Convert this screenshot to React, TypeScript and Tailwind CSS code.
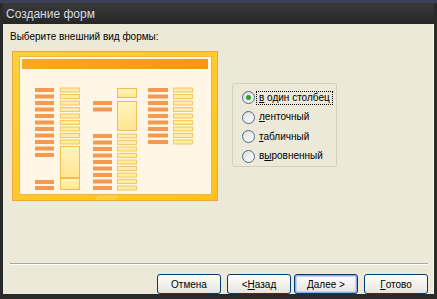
import React from "react";

const col1 = [37, 43.5, 50, 56.5, 63, 69.5, 76, 82.5, 89, 95.5, 102, 129, 135];
const col2 = [37, 43.5, 50, 56.5, 63, 69.5, 76, 82.5, 89];
const col34 = [83, 89.5, 96, 102.5, 109, 115.5, 122, 128.5, 135];

function FormPreview() {
  const orange = "#F59A50";
  const yFill = "#FFEDA0";
  const yStroke = "#F3BC50";
  return (
    <svg width="206" height="150" viewBox="0 0 206 150">
      <defs>
        <linearGradient id="frame" x1="0" y1="0" x2="1" y2="1">
          <stop offset="0" stopColor="#FFD23A" />
          <stop offset="1" stopColor="#FFC21A" />
        </linearGradient>
        <linearGradient id="bar" x1="0" y1="0" x2="1" y2="0">
          <stop offset="0" stopColor="#F9A825" />
          <stop offset="1" stopColor="#F7941D" />
        </linearGradient>
        <linearGradient id="box" x1="0" y1="0" x2="0" y2="1">
          <stop offset="0" stopColor="#FFF3C0" />
          <stop offset="1" stopColor="#FFE690" />
        </linearGradient>
      </defs>
      <rect x="0" y="0" width="206" height="150" fill="#F2A53C" />
      <rect x="1" y="1" width="204" height="148" fill="url(#frame)" />
      <rect x="7.5" y="5.5" width="192" height="138" fill="#FFF6E6" stroke="#F2B54A" />
      <rect x="10" y="8" width="186" height="10" fill="url(#bar)" />
      {col1.map((y) => (
        <rect key={"a" + y} x="23" y={y} width="19" height="4" fill={orange} />
      ))}
      {col2.map((y) => (
        <rect key={"b" + y} x="48.5" y={y} width="19" height="4" fill={yFill} stroke={yStroke} strokeWidth="0.8" />
      ))}
      <rect x="48.5" y="95.5" width="19" height="31" fill="url(#box)" stroke={yStroke} />
      <rect x="48.5" y="127.5" width="19" height="11" fill="url(#box)" stroke={yStroke} />
      {[50, 56.5].concat(col34).map((y) => (
        <rect key={"c" + y} x="81" y={y} width="19" height="4" fill={orange} />
      ))}
      <rect x="105.5" y="37.5" width="19" height="9" fill="url(#box)" stroke={yStroke} />
      <rect x="105.5" y="50.5" width="19" height="29" fill="url(#box)" stroke={yStroke} />
      {col34.map((y) => (
        <rect key={"d" + y} x="105.5" y={y} width="19" height="4" fill={yFill} stroke={yStroke} strokeWidth="0.8" />
      ))}
      {col2.map((y) => (
        <rect key={"e" + y} x="136" y={y} width="20" height="4" fill={orange} />
      ))}
      {col2.map((y) => (
        <rect key={"f" + y} x="161.5" y={y} width="19" height="4" fill={yFill} stroke={yStroke} strokeWidth="0.8" />
      ))}
      {[0, 3, 6, 9, 12, 15, 18].map((d) => (
        <line key={"h" + d} x1={84 + d} y1="149" x2={88 + d} y2="144" stroke="#FFE27A" strokeWidth="1" />
      ))}
    </svg>
  );
}

function Radio({ checked, children, focus }: { checked?: boolean; children: React.ReactNode; focus?: boolean }) {
  return (
    <div className="flex h-[20px] items-center gap-[1px] whitespace-nowrap">
      <span className="flex h-[13px] w-[13px] shrink-0 items-center justify-center rounded-full border border-[#4A6A94] bg-gradient-to-br from-[#DCDCD6] to-white">
        {checked && <span className="h-[5px] w-[5px] rounded-full bg-[#2FA02F]" />}
      </span>
      <span className={"px-[2px] leading-[12px] " + (focus ? "border border-dotted border-black" : "border border-transparent")}>
        {children}
      </span>
    </div>
  );
}

function Btn({ children, def }: { children: React.ReactNode; def?: boolean }) {
  return (
    <button
      className={
        "flex h-[20px] w-[64px] items-center justify-center whitespace-nowrap rounded-[3px] border border-[#003C74] bg-gradient-to-b from-white to-[#E6E4DC] text-[10px] text-black " +
        (def ? "shadow-[inset_0_0_0_1px_#8FA9E8,inset_0_0_0_2px_#C5D4F7]" : "")
      }
    >
      {children}
    </button>
  );
}

export default function App() {
  return (
    <div
      className="flex h-[299px] w-[437px] flex-col bg-[#2A2A2A] pb-[5px] pl-[3px] pr-[3px] text-[10px] text-black"
      style={{ fontFamily: "'Liberation Sans', Arial, sans-serif" }}
    >
      <div className="-mx-[3px] h-[3px] bg-[#3C4156]" />
      <div className="flex h-[21px] items-center bg-gradient-to-b from-[#3A3A3A] to-[#262626] pl-[3px] text-[12px] text-[#D6DBE6]">
        Создание форм
      </div>
      <div className="flex flex-1 flex-col border-r border-white bg-[#ECE9D8]">
        <div className="ml-[7px] mt-[6px] h-[14px] leading-[14px]">Выберите внешний вид формы:</div>
        <div className="mt-[7px] flex">
          <div className="ml-[9px]">
            <FormPreview />
          </div>
          <div className="ml-[14px] mt-[32px] flex h-[84px] w-[105px] flex-col rounded-[3px] border border-[#D3D0BF] pl-[9px] pt-[4px]">
            <Radio checked focus>
              <span className="underline">в</span> один столбец
            </Radio>
            <Radio>
              <span className="underline">л</span>енточный
            </Radio>
            <Radio>
              <span className="underline">т</span>абличный
            </Radio>
            <Radio>
              в<span className="underline">ы</span>ровненный
            </Radio>
          </div>
        </div>
        <div className="ml-[7px] mr-[5px] mt-[62px] h-[2px] border-t border-[#ACA899] border-b-white border-b" />
        <div className="mt-[9px] flex justify-end pr-[5px]">
          <Btn>Отмена</Btn>
          <div className="ml-[6px]">
            <Btn>
              &lt; <span className="underline">Н</span>азад
            </Btn>
          </div>
          <div className="ml-[3px]">
            <Btn def>
              <span className="underline">Д</span>алее &gt;
            </Btn>
          </div>
          <div className="ml-[6px]">
            <Btn>
              <span className="underline">Г</span>отово
            </Btn>
          </div>
        </div>
      </div>
    </div>
  );
}
